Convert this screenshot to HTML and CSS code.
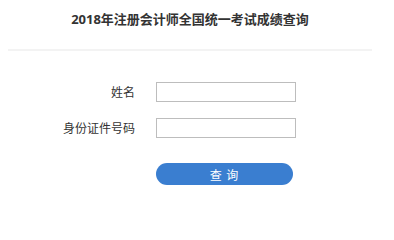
FILE: index.html
```html
<!DOCTYPE html>
<html lang="zh">
<head>
<meta charset="utf-8">
<link rel="stylesheet" href="styles.css">
</head>
<body>
<div class="page">
  <h1 class="title">2018年注册会计师全国统一考试成绩查询</h1>
  <div class="divider"></div>
  <form class="form">
    <div class="row">
      <label class="label">姓名</label>
      <input class="input" type="text">
    </div>
    <div class="row">
      <label class="label">身份证件号码</label>
      <input class="input" type="text">
    </div>
    <div class="row row-btn">
      <span class="label"></span>
      <button class="btn" type="button">查 询</button>
    </div>
  </form>
</div>
</body>
</html>
```
FILE: styles.css
```css
html, body {
  margin: 0;
  padding: 0;
  background: #fff;
}
body {
  font-family: "Open Sans", "Noto Sans CJK SC", sans-serif;
  color: #333;
}
.page {
  width: 364px;
  margin-left: 8px;
}
.title {
  margin: 0;
  padding-top: 11px;
  height: 32px;
  box-sizing: border-box;
  text-align: center;
  font-size: 13px;
  line-height: 16px;
  font-weight: bold;
  color: #333;
}
.divider {
  margin-top: 17px;
  height: 2px;
  background: #f3f3f3;
}
.form {
  display: flex;
  flex-direction: column;
  gap: 16px;
  padding-top: 31px;
}
.row {
  display: flex;
  align-items: center;
}
.label {
  width: 127px;
  text-align: right;
  font-size: 12px;
  color: #333;
  margin-right: 21px;
}
.input {
  width: 140px;
  height: 20px;
  box-sizing: border-box;
  border: 1px solid #bdbdbd;
  margin: 0;
  padding: 0 4px;
}
.row-btn {
  margin-top: 9px;
}
.btn {
  width: 137px;
  height: 22px;
  border: none;
  border-radius: 11px;
  background: #3a7ed0;
  color: #fff;
  font-family: "Noto Sans CJK SC", sans-serif;
  font-size: 12px;
  letter-spacing: 1px;
  padding: 0;
  margin: 0;
}
```
